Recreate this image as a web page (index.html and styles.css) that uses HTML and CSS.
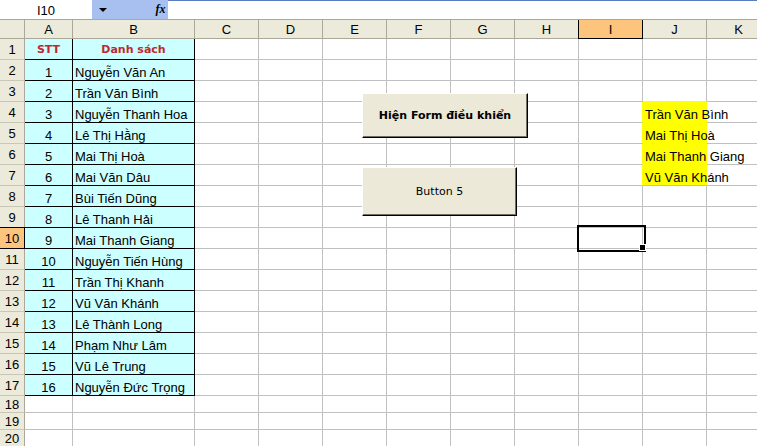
FILE: index.html
```html
<!DOCTYPE html>
<html lang="vi">
<head>
<meta charset="utf-8">
<title>Excel</title>
<link rel="stylesheet" href="styles.css">
</head>
<body>
<div class="app">
  <div class="fbar">
    <div class="namebox">I10</div>
    <div class="nbtn"><span class="tri"></span></div>
    <div class="fx">fx</div>
    <div class="finput"></div>
  </div>
  <div class="sheet">
    <div class="ch corner"></div><div class="ch">A</div><div class="ch">B</div><div class="ch">C</div><div class="ch">D</div><div class="ch">E</div><div class="ch">F</div><div class="ch">G</div><div class="ch">H</div><div class="ch sel">I</div><div class="ch">J</div><div class="ch">K</div>

    <div class="rh">1</div><div class="c cy ctr hdr">STT</div><div class="c cy ctr hdr">Danh sách</div><div class="c"></div><div class="c"></div><div class="c"></div><div class="c"></div><div class="c"></div><div class="c"></div><div class="c"></div><div class="c"></div><div class="c"></div>
    <div class="rh">2</div><div class="c cy ctr">1</div><div class="c cy">Nguyễn Văn An</div><div class="c"></div><div class="c"></div><div class="c"></div><div class="c"></div><div class="c"></div><div class="c"></div><div class="c"></div><div class="c"></div><div class="c"></div>
    <div class="rh">3</div><div class="c cy ctr">2</div><div class="c cy">Trần Văn Bình</div><div class="c"></div><div class="c"></div><div class="c"></div><div class="c"></div><div class="c"></div><div class="c"></div><div class="c"></div><div class="c yt"></div><div class="c"></div>
    <div class="rh">4</div><div class="c cy ctr">3</div><div class="c cy">Nguyễn Thanh Hoa</div><div class="c"></div><div class="c"></div><div class="c"></div><div class="c"></div><div class="c"></div><div class="c"></div><div class="c ye"></div><div class="c yl">Trần Văn Bình</div><div class="c"></div>
    <div class="rh">5</div><div class="c cy ctr">4</div><div class="c cy">Lê Thị Hằng</div><div class="c"></div><div class="c"></div><div class="c"></div><div class="c"></div><div class="c"></div><div class="c"></div><div class="c ye"></div><div class="c yl">Mai Thị Hoà</div><div class="c"></div>
    <div class="rh">6</div><div class="c cy ctr">5</div><div class="c cy">Mai Thị Hoà</div><div class="c"></div><div class="c"></div><div class="c"></div><div class="c"></div><div class="c"></div><div class="c"></div><div class="c ye"></div><div class="c yl">Mai Thanh Giang</div><div class="c"></div>
    <div class="rh">7</div><div class="c cy ctr">6</div><div class="c cy">Mai Văn Dâu</div><div class="c"></div><div class="c"></div><div class="c"></div><div class="c"></div><div class="c"></div><div class="c"></div><div class="c ye"></div><div class="c yl last">Vũ Văn Khánh</div><div class="c"></div>
    <div class="rh">8</div><div class="c cy ctr">7</div><div class="c cy">Bùi Tiến Dũng</div><div class="c"></div><div class="c"></div><div class="c"></div><div class="c"></div><div class="c"></div><div class="c"></div><div class="c"></div><div class="c"></div><div class="c"></div>
    <div class="rh">9</div><div class="c cy ctr">8</div><div class="c cy">Lê Thanh Hải</div><div class="c"></div><div class="c"></div><div class="c"></div><div class="c"></div><div class="c"></div><div class="c"></div><div class="c"></div><div class="c"></div><div class="c"></div>
    <div class="rh rsel">10</div><div class="c cy ctr">9</div><div class="c cy">Mai Thanh Giang</div><div class="c"></div><div class="c"></div><div class="c"></div><div class="c"></div><div class="c"></div><div class="c"></div><div class="c active"></div><div class="c"></div><div class="c"></div>
    <div class="rh">11</div><div class="c cy ctr">10</div><div class="c cy">Nguyễn Tiến Hùng</div><div class="c"></div><div class="c"></div><div class="c"></div><div class="c"></div><div class="c"></div><div class="c"></div><div class="c"></div><div class="c"></div><div class="c"></div>
    <div class="rh">12</div><div class="c cy ctr">11</div><div class="c cy">Trần Thị Khanh</div><div class="c"></div><div class="c"></div><div class="c"></div><div class="c"></div><div class="c"></div><div class="c"></div><div class="c"></div><div class="c"></div><div class="c"></div>
    <div class="rh">13</div><div class="c cy ctr">12</div><div class="c cy">Vũ Văn Khánh</div><div class="c"></div><div class="c"></div><div class="c"></div><div class="c"></div><div class="c"></div><div class="c"></div><div class="c"></div><div class="c"></div><div class="c"></div>
    <div class="rh">14</div><div class="c cy ctr">13</div><div class="c cy">Lê Thành Long</div><div class="c"></div><div class="c"></div><div class="c"></div><div class="c"></div><div class="c"></div><div class="c"></div><div class="c"></div><div class="c"></div><div class="c"></div>
    <div class="rh">15</div><div class="c cy ctr">14</div><div class="c cy">Phạm Như Lâm</div><div class="c"></div><div class="c"></div><div class="c"></div><div class="c"></div><div class="c"></div><div class="c"></div><div class="c"></div><div class="c"></div><div class="c"></div>
    <div class="rh">16</div><div class="c cy ctr">15</div><div class="c cy">Vũ Lê Trung</div><div class="c"></div><div class="c"></div><div class="c"></div><div class="c"></div><div class="c"></div><div class="c"></div><div class="c"></div><div class="c"></div><div class="c"></div>
    <div class="rh">17</div><div class="c cy ctr">16</div><div class="c cy">Nguyễn Đức Trọng</div><div class="c"></div><div class="c"></div><div class="c"></div><div class="c"></div><div class="c"></div><div class="c"></div><div class="c"></div><div class="c"></div><div class="c"></div>
    <div class="rh">18</div><div class="c"></div><div class="c"></div><div class="c"></div><div class="c"></div><div class="c"></div><div class="c"></div><div class="c"></div><div class="c"></div><div class="c"></div><div class="c"></div><div class="c"></div>
    <div class="rh">19</div><div class="c"></div><div class="c"></div><div class="c"></div><div class="c"></div><div class="c"></div><div class="c"></div><div class="c"></div><div class="c"></div><div class="c"></div><div class="c"></div><div class="c"></div>
    <div class="rh">20</div><div class="c"></div><div class="c"></div><div class="c"></div><div class="c"></div><div class="c"></div><div class="c"></div><div class="c"></div><div class="c"></div><div class="c"></div><div class="c"></div><div class="c"></div>
  </div>
  <button class="btn btn-form" type="button">Hiện Form điều khiển</button>
  <button class="btn btn-five" type="button">Button 5</button>
</div>
</body>
</html>
```
FILE: styles.css
```css
* { box-sizing: border-box; }
html, body { margin: 0; padding: 0; background: #fff; }
.app {
  position: relative;
  width: 757px;
  height: 446px;
  overflow: hidden;
  font-family: "Liberation Sans", Arial, sans-serif;
  font-size: 13px;
  color: #000;
}
.fbar {
  display: flex;
  height: 19px;
}
.namebox {
  width: 92px;
  display: flex;
  align-items: center;
  justify-content: center;
  background: #fff;
  padding-top: 1px;
}
.nbtn {
  width: 58px;
  background: #a8c0ef;
  display: flex;
  align-items: center;
  padding-left: 7px;
}
.tri {
  width: 0;
  height: 0;
  border-left: 4px solid transparent;
  border-right: 4px solid transparent;
  border-top: 4px solid #000;
  margin-top: 1px;
}
.fx {
  width: 18px;
  background: #a8c0ef;
  font-family: "Liberation Serif", serif;
  font-style: italic;
  font-weight: bold;
  font-size: 12px;
  display: flex;
  align-items: center;
  justify-content: center;
  padding-left: 3px;
}
.finput {
  flex: 1;
  border-top: 1px solid #5a7dbd;
  background: #fff;
}
.sheet {
  display: grid;
  grid-template-columns: 25px 48px 122px repeat(9, 64px);
  grid-template-rows: 19px repeat(17, 21px) repeat(3, 17px);
  border-top: 1px solid #aca899;
}
.ch, .rh {
  background: #ebeadb;
  border-right: 1px solid #aca899;
  border-bottom: 1px solid #aca899;
  display: flex;
  align-items: center;
  justify-content: center;
  line-height: 15px;
}
.ch { padding-top: 1px; }
.rh { border-bottom-color: #c9c6b6; padding-top: 1px; }
.sel {
  background: #fcc47c;
  border-right-color: #000;
  border-bottom-color: #000;
  box-shadow: -1px 0 0 #000;
}
.rsel {
  background: #fcc47c;
  border-right-color: #000;
  border-bottom-color: #000;
  box-shadow: 0 -1px 0 #000;
}
.c {
  border-right: 1px solid #c0c0c0;
  border-bottom: 1px solid #c0c0c0;
  display: flex;
  align-items: flex-end;
  white-space: nowrap;
  line-height: 15px;
  padding: 0 2px;
  min-width: 0;
}
.cy {
  background: #ccffff;
  border-right-color: #000;
  border-bottom-color: #000;
}
.ctr { justify-content: center; }
.hdr {
  font-family: "DejaVu Sans", Tahoma, sans-serif;
  font-weight: bold;
  font-size: 11px;
  color: #c1272d;
  padding-bottom: 2px;
}
.yl {
  background: #ffff00;
  border-right-color: #ffff00;
  border-bottom-color: #ffff00;
}
.yl.last { border-bottom-color: #c0c0c0; }
.ye { border-right-color: #ffff00; }
.yt { border-bottom-color: #ffff00; }
.active { position: relative; }
.active::after {
  content: "";
  position: absolute;
  left: -2px;
  top: -3px;
  width: 65px;
  height: 23px;
  border: 2px solid #000;
}
.active::before {
  content: "";
  position: absolute;
  right: -3px;
  bottom: -2px;
  width: 5px;
  height: 5px;
  background: #000;
  z-index: 1;
  box-shadow: 0 0 0 1px #fff;
}
.btn {
  position: absolute;
  left: 362px;
  margin: 0;
  padding: 0;
  background: #ece9d8;
  border: 1px solid;
  border-color: #fff #000 #000 #fff;
  box-shadow: inset -1px -1px 0 #716f64;
  font-family: "DejaVu Sans", Tahoma, sans-serif;
  font-size: 11px;
  color: #000;
  display: flex;
  align-items: center;
  justify-content: center;
}
.btn-form {
  top: 93px;
  width: 166px;
  height: 45px;
  font-weight: bold;
}
.btn-five {
  top: 167px;
  width: 155px;
  height: 49px;
}
```
